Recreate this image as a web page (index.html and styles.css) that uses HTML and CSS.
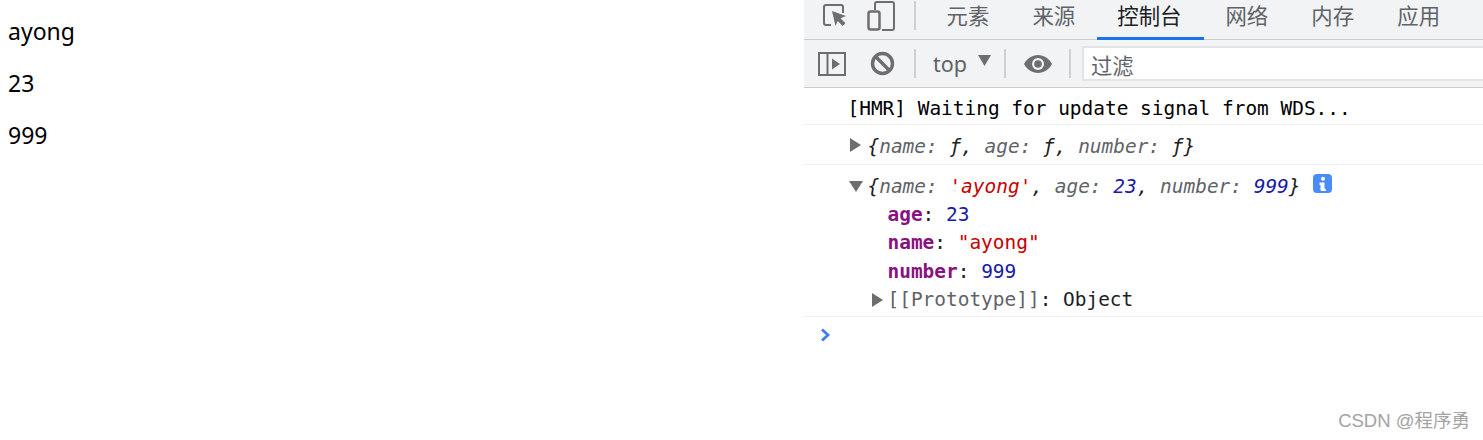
FILE: index.html
```html
<!DOCTYPE html>
<html lang="zh">
<head>
<meta charset="utf-8">
<title>DevTools</title>
<link rel="stylesheet" href="styles.css">
</head>
<body>
<main class="page">
  <p>ayong</p>
  <p>23</p>
  <p>999</p>
</main>
<section class="devtools">
  <nav class="tabbar">
    <svg class="tool-ic inspect" width="26" height="26" viewBox="0 0 26 26"><path d="M9 22H4a2 2 0 0 1-2-2V4a2 2 0 0 1 2-2h15a2 2 0 0 1 2 2v6" fill="none" stroke="#6e6e6e" stroke-width="2"/><path d="M10 8l14 5-5.500 2.200 5 5-2.800 2.800-5-5L13.500 23z" fill="#6e6e6e"/></svg>
    <svg class="tool-ic device" width="28" height="30" viewBox="0 0 28 30"><path d="M8 9V3a2 2 0 0 1 2-2h15a2 2 0 0 1 2 2v24a2 2 0 0 1-2 2H15" fill="none" stroke="#6e6e6e" stroke-width="2"/><rect x="1.500" y="10.500" width="11" height="18" rx="2" fill="none" stroke="#6e6e6e" stroke-width="2.500"/></svg>
    <span class="sep tab-sep"></span>
    <div class="tabs">
      <span class="tab">元素</span>
      <span class="tab">来源</span>
      <span class="tab active">控制台</span>
      <span class="tab">网络</span>
      <span class="tab">内存</span>
      <span class="tab">应用</span>
    </div>
  </nav>
  <div class="toolbar">
    <svg class="bar-ic sidebar" width="28" height="24" viewBox="0 0 28 24"><rect x="1" y="1" width="26" height="22" fill="none" stroke="#6e6e6e" stroke-width="2"/><path d="M9.500 1v22" stroke="#6e6e6e" stroke-width="2"/><path d="M14 6.500l8 5.500-8 5.500z" fill="#6e6e6e"/></svg>
    <svg class="bar-ic block" width="25" height="25" viewBox="0 0 25 25"><circle cx="12.500" cy="12.500" r="10" fill="none" stroke="#6e6e6e" stroke-width="3.400"/><path d="M5.500 5.500l14 14" stroke="#6e6e6e" stroke-width="3.400"/></svg>
    <span class="sep sep-first"></span>
    <span class="ctx">top</span>
    <svg class="bar-ic ctx-arrow" width="13" height="11" viewBox="0 0 13 11"><path d="M0 0h13L6.500 11z" fill="#6e6e6e"/></svg>
    <span class="sep sep-ctx"></span>
    <svg class="bar-ic eye" width="28" height="18" viewBox="0 0 28 18"><path d="M14 0C8 0 3 3.700 0 9c3 5.300 8 9 14 9s11-3.700 14-9c-3-5.300-8-9-14-9z" fill="#6e6e6e"/><circle cx="14" cy="9" r="6" fill="#f1f3f4"/><circle cx="14" cy="9" r="3.800" fill="#6e6e6e"/></svg>
    <span class="sep sep-eye"></span>
    <div class="filter">过滤</div>
  </div>
  <div class="console">
    <div class="row row-hmr">[HMR] Waiting for update signal from WDS...</div>
    <div class="row row-fn">
      <svg class="tri" width="11" height="14" viewBox="0 0 11 14"><path d="M0 0l11 7-11 7z" fill="#6e6e6e"/></svg>
      <i class="preview"><span class="bk">{</span><span class="key">name:</span> <span class="bk">ƒ,</span> <span class="key">age:</span> <span class="bk">ƒ,</span> <span class="key">number:</span> <span class="bk">ƒ}</span></i>
    </div>
    <div class="row row-obj">
      <div class="obj-head">
        <svg class="tri tri-down" width="14" height="11" viewBox="0 0 14 11"><path d="M0 0h14L7 11z" fill="#6e6e6e"/></svg>
        <i class="preview"><span class="bk">{</span><span class="key">name:</span> <span class="str">'ayong'</span><span class="bk">,</span> <span class="key">age:</span> <span class="num">23</span><span class="bk">,</span> <span class="key">number:</span> <span class="num">999</span><span class="bk">}</span></i>
        <svg class="info" width="19" height="19" viewBox="0 0 19 19"><rect width="19" height="19" rx="4" fill="#4b8bf5"/><circle cx="10" cy="4.800" r="2" fill="#fff"/><path d="M6.500 8.500h5v6l1.500 1V17H9c-1 0-1.500-.6-1.500-1.500V11H6.500z" fill="#fff"/></svg>
      </div>
      <div class="prop"><b class="pk">age</b><span class="bk">:</span> <span class="num">23</span></div>
      <div class="prop"><b class="pk">name</b><span class="bk">:</span> <span class="str">"ayong"</span></div>
      <div class="prop"><b class="pk">number</b><span class="bk">:</span> <span class="num">999</span></div>
      <div class="prop proto">
        <svg class="tri tri-proto" width="11" height="14" viewBox="0 0 11 14"><path d="M0 0l11 7-11 7z" fill="#6e6e6e"/></svg>
        <span><span class="key">[[Prototype]]</span><span class="bk">: Object</span></span>
      </div>
    </div>
    <div class="prompt">
      <svg width="11" height="14" viewBox="0 0 11 14"><path d="M2 1.500L8 7l-6 5.500" fill="none" stroke="#3d7ff0" stroke-width="2.800"/></svg>
    </div>
  </div>
</section>
<div class="watermark">CSDN @程序勇</div>
</body>
</html>
```

FILE: styles.css
```css
html, body {
  margin: 0;
  padding: 0;
  height: 440px;
  overflow: hidden;
  background: #fff;
}
body {
  display: flex;
  font-family: "Noto Sans", "Noto Sans CJK SC", sans-serif;
}
.page {
  width: 804px;
  flex: none;
  padding: 15px 0 0 8px;
  box-sizing: border-box;
  font-size: 23px;
  color: #000;
}
.page p {
  margin: 0 0 20px;
  line-height: 32px;
}
.devtools {
  flex: 1;
  min-width: 0;
  overflow: hidden;
}
.tabbar {
  display: flex;
  align-items: center;
  height: 39px;
  background: #f1f3f4;
  border-bottom: 1px solid #cbcdd1;
  padding-left: 18px;
}
.tool-ic { flex: none; }
.inspect { margin-top: -7px; }
.device { margin-left: 19px; margin-top: -7px; }
.tabs {
  display: flex;
  align-self: stretch;
  margin-left: -2.050px;
}
.tab {
  position: relative;
  height: 39px;
  padding: 0 21.550px;
  line-height: 30px;
  font-size: 21.400px;
  font-family: "Noto Sans CJK SC", sans-serif;
  color: #5f6368;
  white-space: nowrap;
}
.tab.active {
  color: #202124;
  padding: 0 22.500px 0 20.500px;
}
.tab.active::after {
  content: "";
  position: absolute;
  left: 0;
  right: 0;
  bottom: -1px;
  height: 3px;
  background: #1a73e8;
}
.sep {
  flex: none;
  width: 2px;
  height: 29px;
  background: #cfd0d3;
  margin-left: 20px;
}
.tab-sep {
  margin-left: 19px;
  margin-right: 11px;
  margin-top: -9px;
}
.toolbar {
  display: flex;
  align-items: center;
  height: 47px;
  background: #f1f3f4;
  border-bottom: 1px solid #cbcdd1;
  padding-left: 14px;
}
.bar-ic { flex: none; }
.block { margin-left: 24px; }
.sep-first { margin-left: 19px; }
.ctx {
  margin-left: 17px;
  font-size: 21.500px;
  color: #5f6368;
  line-height: 29px;
}
.ctx-arrow {
  margin-left: 11px;
  margin-top: -6px;
}
.sep-ctx { margin-left: 13px; }
.eye { margin-left: 18px; }
.sep-eye { margin-left: 17px; }
.filter {
  flex: none;
  width: 500px;
  height: 35px;
  margin-left: 11px;
  box-sizing: border-box;
  background: #fff;
  border: 2px solid #e3e4e6;
  border-right: 0;
  padding-left: 7px;
  line-height: 33px;
  font-size: 21.300px;
  font-family: "Noto Sans CJK SC", sans-serif;
  color: #5f6368;
}
.console {
  font-family: "DejaVu Sans Mono", monospace;
  font-size: 19.450px;
  color: #202124;
}
.row {
  border-bottom: 1px solid #f0f0f0;
  box-sizing: border-box;
  padding-left: 43.500px;
  white-space: nowrap;
}
.row-hmr {
  height: 37px;
  line-height: 41px;
  color: #000;
}
.row-fn {
  display: flex;
  align-items: center;
  height: 40px;
  padding-top: 4px;
}
.row-fn .tri { margin-top: -3px; }
.row-obj {
  height: 152px;
  padding-top: 7px;
}
.obj-head {
  display: flex;
  align-items: center;
  height: 29px;
}
.tri {
  flex: none;
  margin-left: 2px;
  margin-right: 7px;
}
.tri-down {
  margin-left: 1px;
  margin-right: 5px;
}
.preview { font-style: italic; }
.info {
  flex: none;
  margin-left: 12px;
  margin-top: -6px;
}
.key { color: #5f6368; }
.bk { color: #202124; }
.str { color: #c80000; }
.num { color: #1a1aa6; }
.pk {
  color: #881280;
  font-weight: bold;
}
.prop {
  height: 28.400px;
  line-height: 28.400px;
  padding-left: 40px;
}
.proto {
  display: flex;
  align-items: center;
  padding-left: 24px;
}
.proto .tri {
  margin-left: 0;
  margin-right: 5px;
}
.prompt {
  display: flex;
  padding: 11px 0 0 16px;
}
.watermark {
  position: absolute;
  right: 13px;
  top: 409px;
  font-size: 18.500px;
  line-height: 24px;
  color: #a3a3a3;
  font-family: "Liberation Sans", "Noto Sans CJK SC", sans-serif;
}
```
